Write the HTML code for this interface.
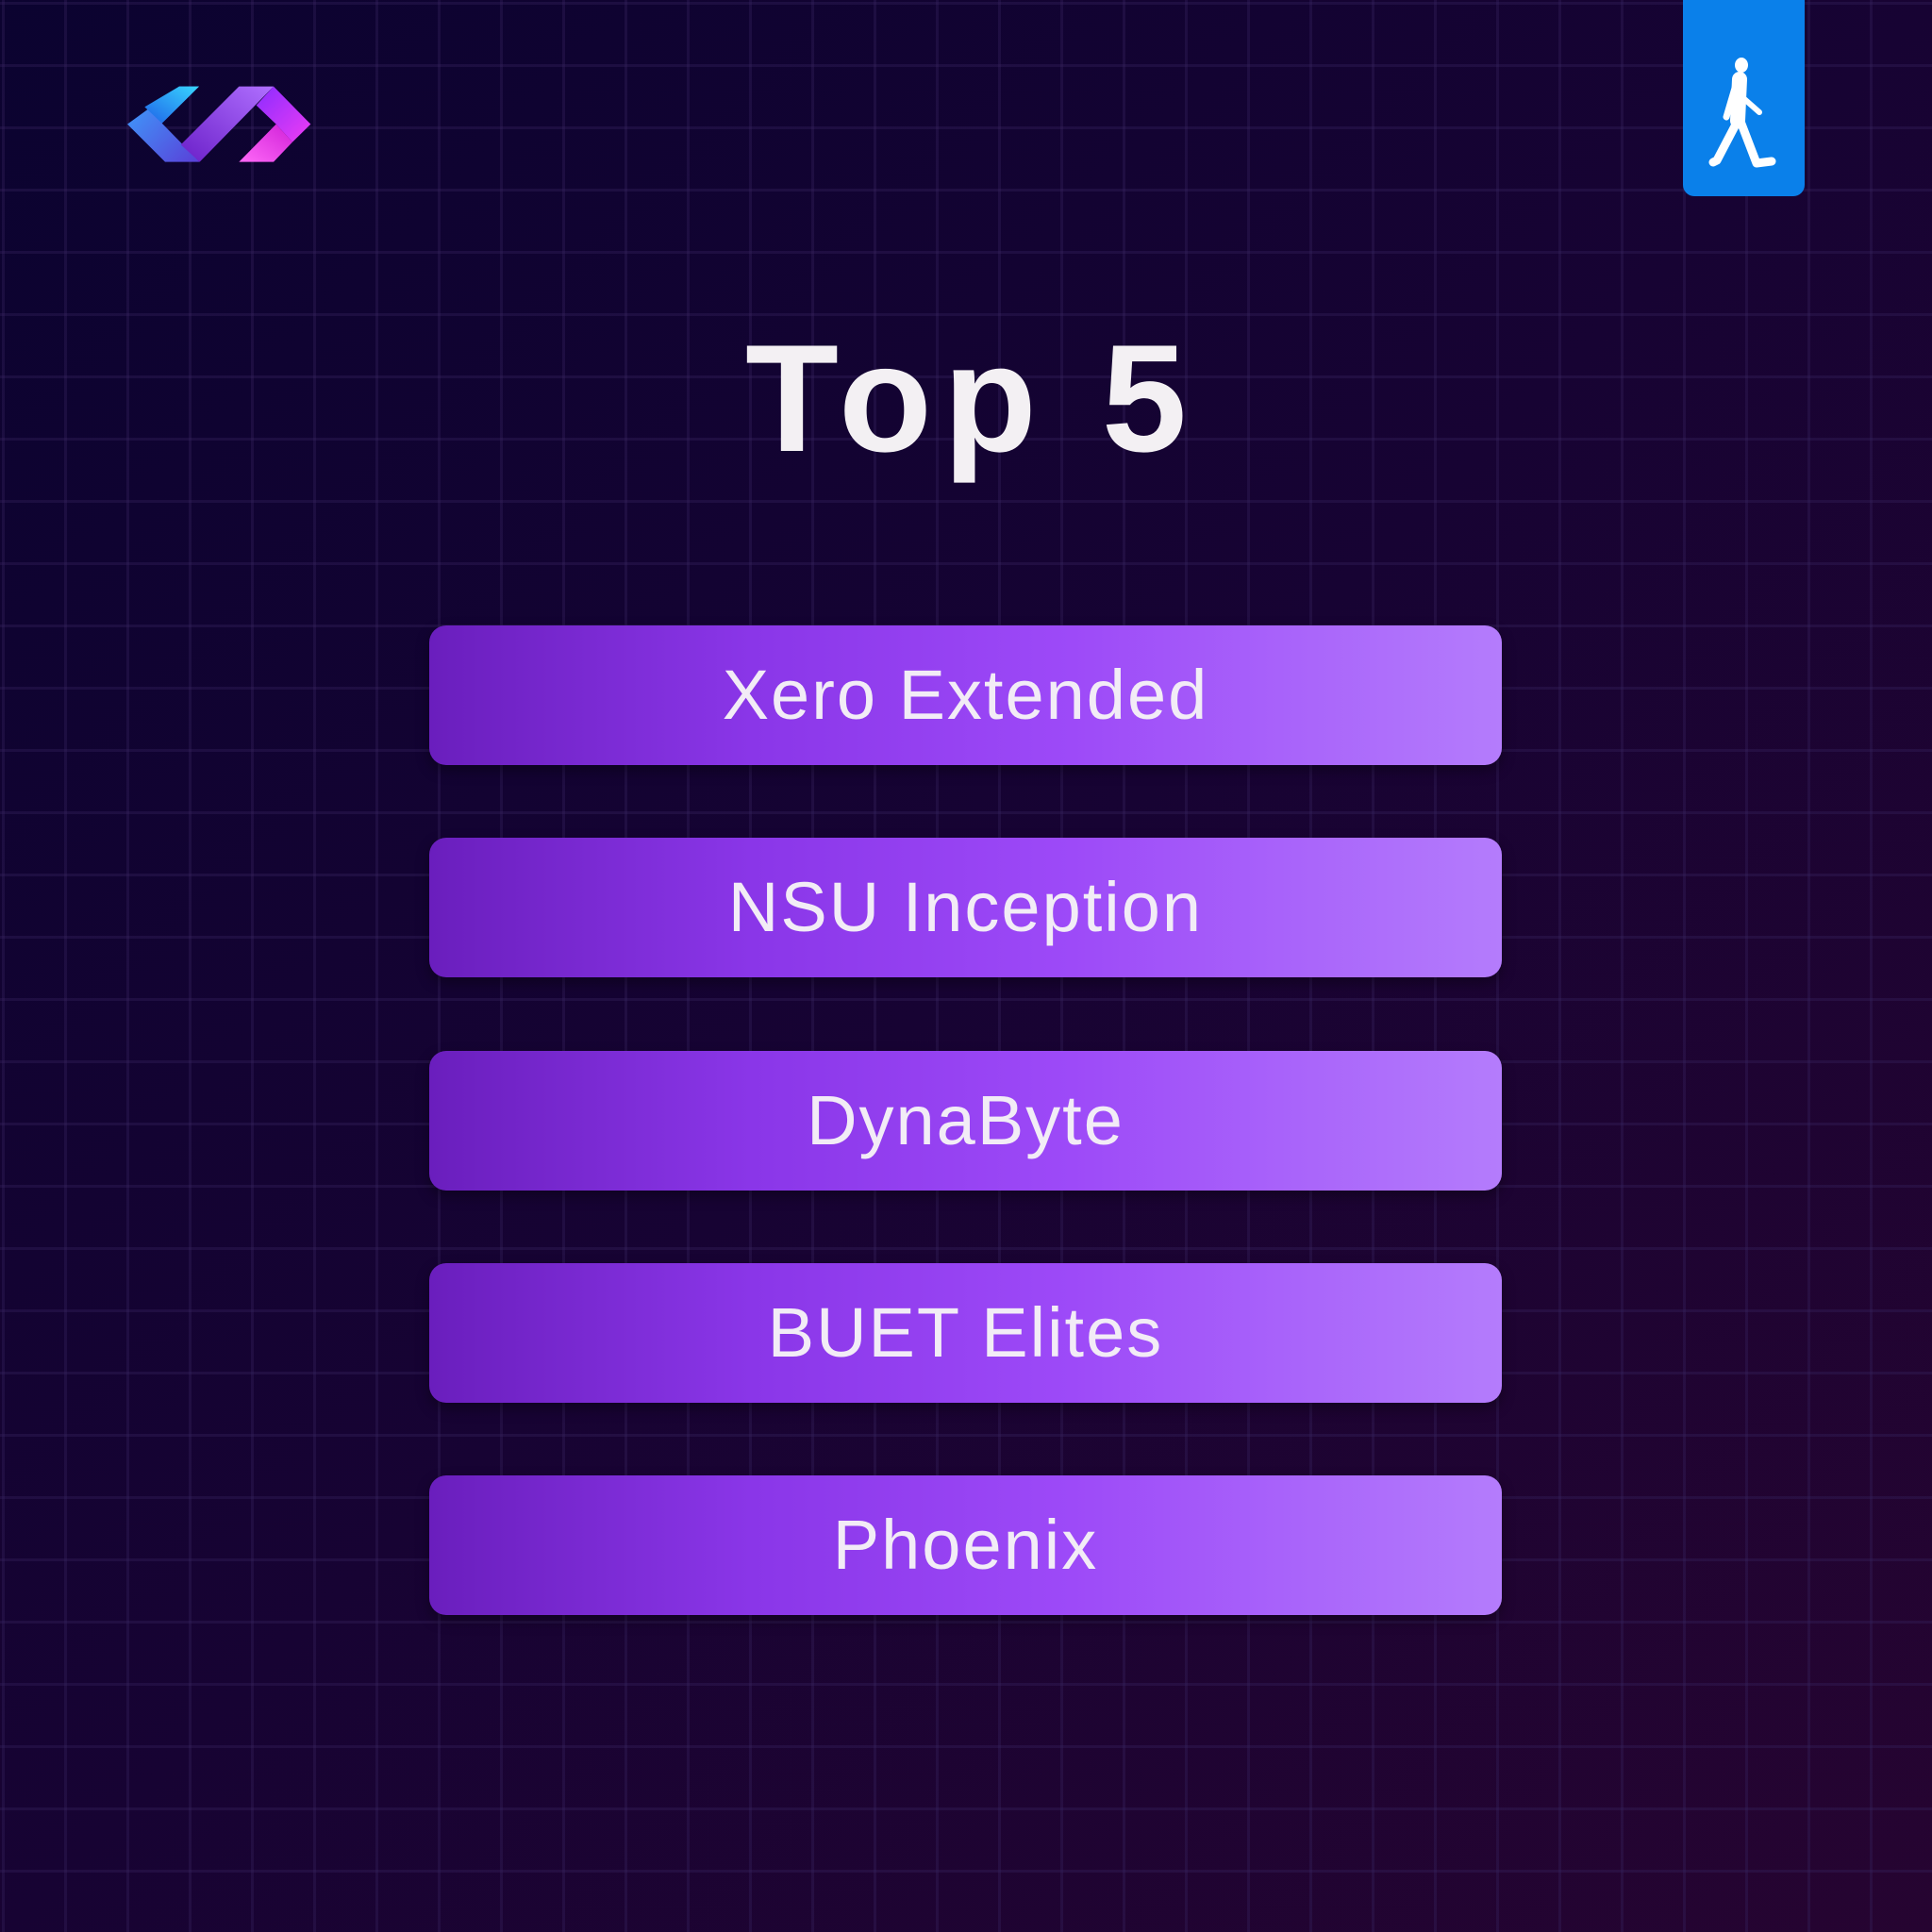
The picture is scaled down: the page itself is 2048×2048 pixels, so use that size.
<!DOCTYPE html>
<html><head><meta charset="utf-8"><style>
*{margin:0;padding:0;box-sizing:border-box}
body{width:2048px;height:2048px;overflow:hidden;position:relative;font-family:"Liberation Sans",sans-serif;
background:linear-gradient(135deg,#0b0330 0%,#170333 50%,#260431 100%);}
.grid{position:absolute;inset:0;background-image:linear-gradient(to right,rgba(55,35,95,.35) 3px,transparent 3px),linear-gradient(to bottom,rgba(55,35,95,.35) 3px,transparent 3px);background-size:66px 66px;background-position:2px 2px}
.title{position:absolute;left:6px;width:2048px;top:342px;text-align:center;color:#f3f0f3;font-weight:bold;font-size:162px;line-height:162px;letter-spacing:12px}
.bar{position:absolute;left:455px;width:1137px;height:148px;border-radius:18px;background:linear-gradient(90deg,#6a1ebd 0%,#8a36e8 30%,#9d4af8 60%,#b47cfc 100%);box-shadow:0 6px 14px rgba(0,0,0,.35);color:#f2ecf6;font-size:74px;text-align:center;line-height:148px;letter-spacing:2px}
.blue{position:absolute;left:1784px;top:-12px;width:129px;height:220px;background:#0a80ea;border-radius:12px}
</style></head><body>
<div class="grid"></div>
<svg style="position:absolute;left:100px;top:60px" width="260" height="140" viewBox="0 0 780 420">
<defs>
<linearGradient id="gb" x1="0" y1="0" x2="1" y2="1"><stop offset="0" stop-color="#3aa6ff"/><stop offset="1" stop-color="#5a3fd8"/></linearGradient>
<linearGradient id="gc" x1="1" y1="0" x2="0" y2="1"><stop offset="0" stop-color="#38d6ff"/><stop offset="1" stop-color="#1f62e8"/></linearGradient>
<linearGradient id="gp" x1="0" y1="1" x2="1" y2="0"><stop offset="0" stop-color="#6a1fc8"/><stop offset="1" stop-color="#b070ff"/></linearGradient>
<linearGradient id="gr" x1="0" y1="0" x2="1" y2="1"><stop offset="0" stop-color="#8a2cff"/><stop offset="1" stop-color="#ee3cf4"/></linearGradient>
<linearGradient id="gk" x1="1" y1="0" x2="0" y2="1"><stop offset="0" stop-color="#d020d8"/><stop offset="1" stop-color="#ff6af8"/></linearGradient>
</defs>
<polygon points="270,95 333,95 215,212 335,335 225,335 105,215" fill="url(#gb)"/>
<polygon points="270,95 333,95 215,212 160,160" fill="url(#gc)"/>
<polygon points="335,335 570,95 460,95 275,280" fill="url(#gp)"/>
<polygon points="515,155 570,95 688,215 630,272 578,215" fill="url(#gr)"/>
<polygon points="460,335 578,215 630,272 570,335" fill="url(#gk)"/>
</svg>
<div class="blue"></div>
<svg style="position:absolute;left:1784px;top:0" width="129" height="208" viewBox="1784 0 129 208">
<g stroke="#fff" stroke-linecap="round" stroke-linejoin="round" fill="none">
<path d="M1844 84 L1842 128" stroke-width="16"/>
<path d="M1840 90 L1830 124" stroke-width="7"/>
<path d="M1848 104 L1865 119" stroke-width="6"/>
<path d="M1842 128 L1820 170 L1816 172" stroke-width="9"/>
<path d="M1844 126 L1862 173 L1878 171" stroke-width="9"/>
</g>
<ellipse cx="1846" cy="69" rx="7" ry="8" fill="#fff"/>
</svg>
<div class="title">Top 5</div>
<div class="bar" style="top:663px">Xero Extended</div>
<div class="bar" style="top:888px">NSU Inception</div>
<div class="bar" style="top:1114px">DynaByte</div>
<div class="bar" style="top:1339px">BUET Elites</div>
<div class="bar" style="top:1564px">Phoenix</div>
</body></html>
